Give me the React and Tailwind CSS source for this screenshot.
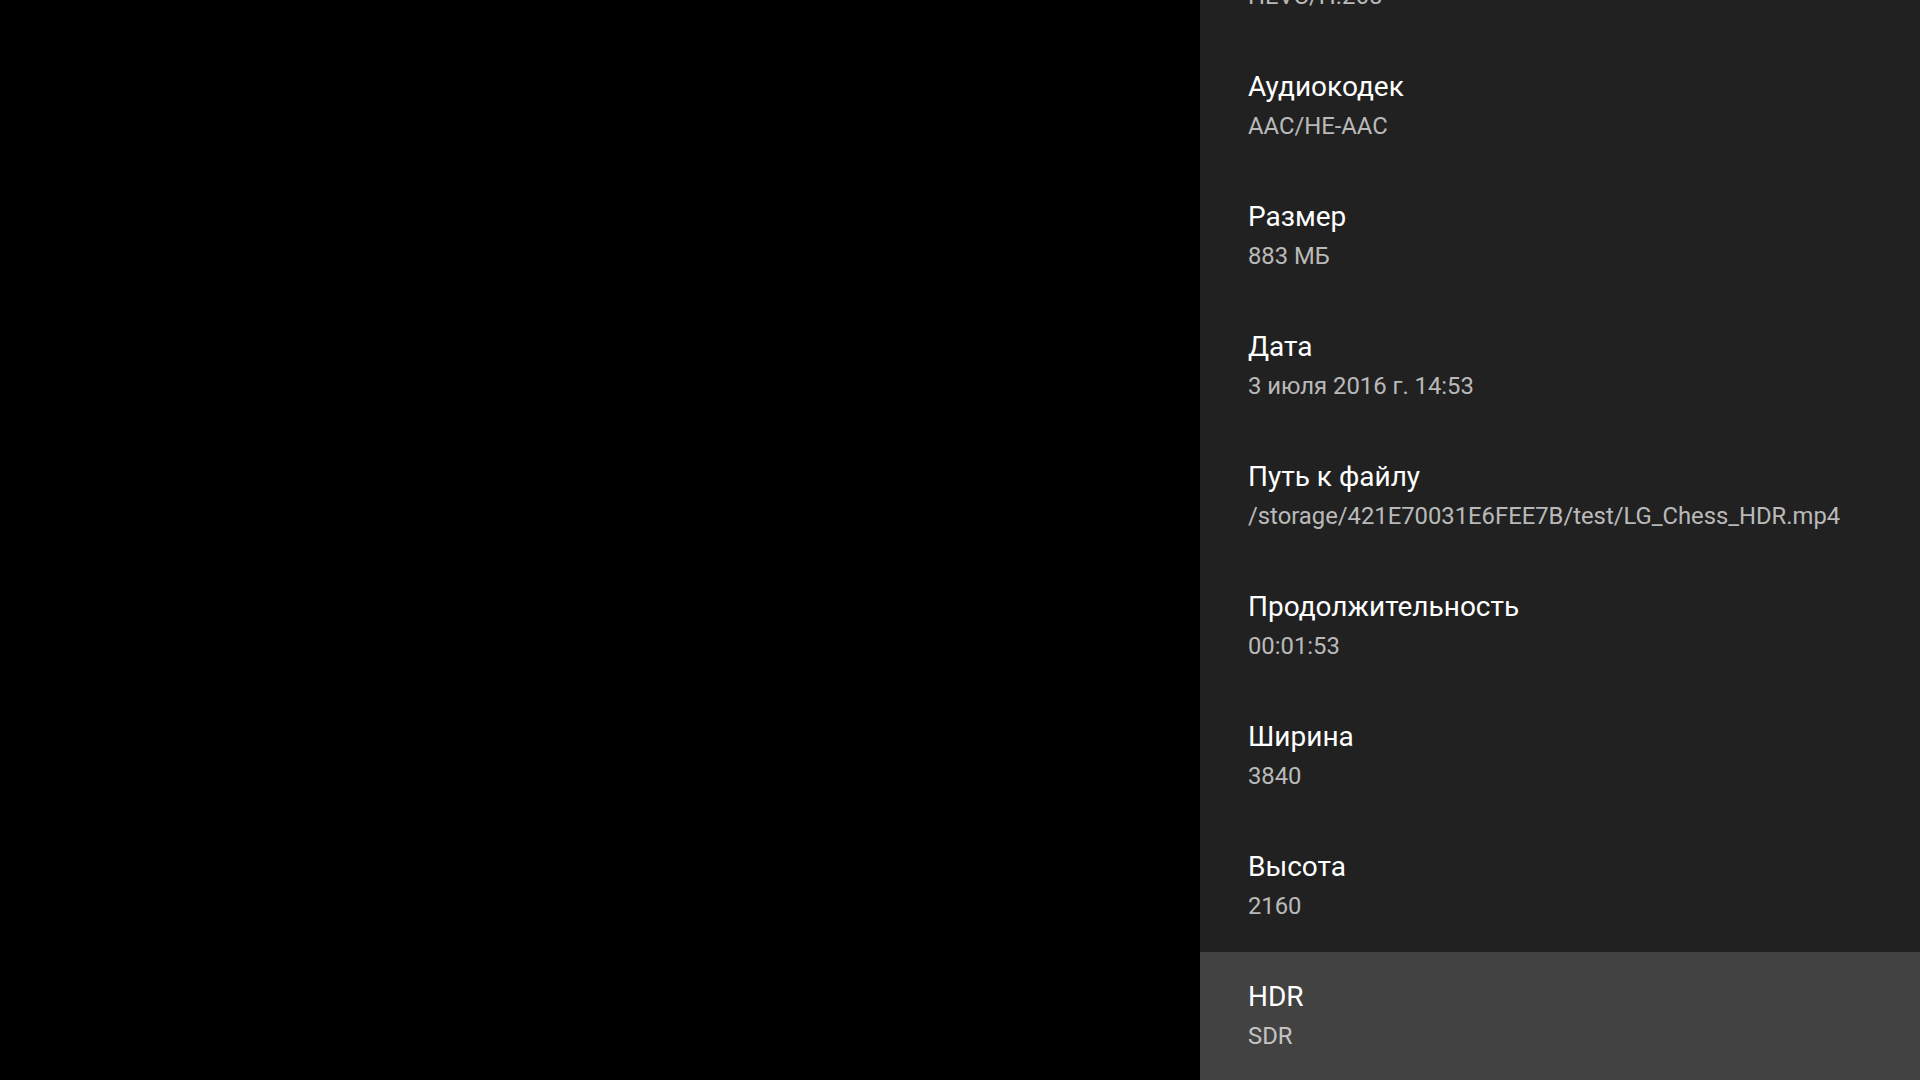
const rows = [
  { title: "Видеокодек", value: "HEVC/H.265" },
  { title: "Аудиокодек", value: "AAC/HE-AAC" },
  { title: "Размер", value: "883 МБ" },
  { title: "Дата", value: "3 июля 2016 г. 14:53" },
  { title: "Путь к файлу", value: "/storage/421E70031E6FEE7B/test/LG_Chess_HDR.mp4" },
  { title: "Продолжительность", value: "00:01:53" },
  { title: "Ширина", value: "3840" },
  { title: "Высота", value: "2160" },
  { title: "HDR", value: "SDR", selected: true },
];

export default function App() {
  return (
    <div
      className="flex h-[1080px] w-[1920px] overflow-hidden bg-black"
      style={{ fontFamily: "Roboto, 'Noto Sans', sans-serif" }}
    >
      <div className="flex-1" />
      <div className="h-full w-[720px] overflow-hidden bg-[#212121]">
        <div className="-mt-[88px] flex flex-col">
          {rows.map((row) => (
            <div
              key={row.title}
              className={`flex h-[130px] shrink-0 flex-col pl-12 pt-[29px] ${
                row.selected ? "bg-[#424242]" : ""
              }`}
            >
              <div className="text-[28px] leading-8 text-white">{row.title}</div>
              <div className="mt-[7px] text-[23.8px] leading-8 text-white/70">{row.value}</div>
            </div>
          ))}
        </div>
      </div>
    </div>
  );
}
